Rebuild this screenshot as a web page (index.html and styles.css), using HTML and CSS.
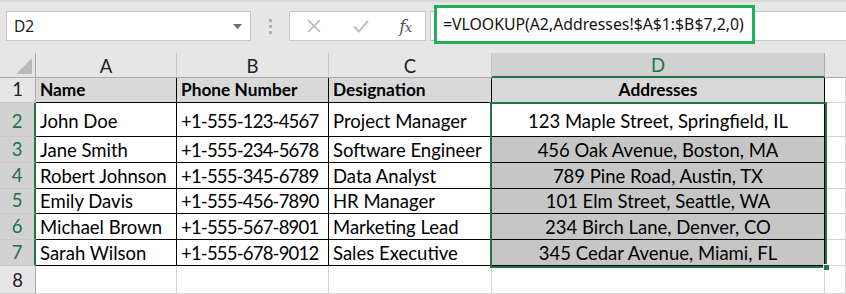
FILE: index.html
```html
<!DOCTYPE html>
<html>
<head>
<meta charset="utf-8">
<link rel="stylesheet" href="styles.css">
</head>
<body>
<div class="app">
  <div class="toolbar">
    <div class="namebox">
      <span class="nb-text">D2</span>
      <svg class="nb-arrow" width="9" height="5" viewBox="0 0 9 5"><path d="M0 0h9L4.5 5z" fill="#6d6d6d"/></svg>
    </div>
    <div class="dots"><span></span><span></span><span></span></div>
    <div class="fbtns">
      <svg class="ic" width="16" height="16" viewBox="0 0 16 16"><path d="M2 2L14 14M14 2L2 14" stroke="#b4b4b4" stroke-width="1.6" fill="none"/></svg>
      <svg class="ic" width="18" height="16" viewBox="0 0 18 16"><path d="M2 8.5L7 13.5L16 3" stroke="#c2c2c2" stroke-width="2.2" fill="none"/></svg>
      <span class="fx">f<i>x</i></span>
    </div>
    <div class="fbar">
      <div class="fbox">=VLOOKUP(A2,Addresses!$A$1:$B$7,2,0)</div>
    </div>
  </div>
  <div class="sheet">
    <div class="grid">
      <div class="corner"><span class="tri"></span></div>
      <div class="ch">A</div>
      <div class="ch">B</div>
      <div class="ch">C</div>
      <div class="ch sel">D</div>
      <div class="ch last"></div>

      <div class="rh">1</div>
      <div class="c t h">Name</div>
      <div class="c t h">Phone Number</div>
      <div class="c t h">Designation</div>
      <div class="c t h ctr">Addresses</div>
      <div class="c"></div>

      <div class="rh sel mid">2</div>
      <div class="c t mid">John Doe</div>
      <div class="c t ph mid">+1-555-123-4567</div>
      <div class="c t mid">Project Manager</div>
      <div class="c t ctr mid">123 Maple Street, Springfield, IL</div>
      <div class="c"></div>

      <div class="rh sel">3</div>
      <div class="c t">Jane Smith</div>
      <div class="c t ph">+1-555-234-5678</div>
      <div class="c t">Software Engineer</div>
      <div class="c t ctr shade">456 Oak Avenue, Boston, MA</div>
      <div class="c"></div>

      <div class="rh sel">4</div>
      <div class="c t">Robert Johnson</div>
      <div class="c t ph">+1-555-345-6789</div>
      <div class="c t">Data Analyst</div>
      <div class="c t ctr shade">789 Pine Road, Austin, TX</div>
      <div class="c"></div>

      <div class="rh sel">5</div>
      <div class="c t">Emily Davis</div>
      <div class="c t ph">+1-555-456-7890</div>
      <div class="c t">HR Manager</div>
      <div class="c t ctr shade">101 Elm Street, Seattle, WA</div>
      <div class="c"></div>

      <div class="rh sel">6</div>
      <div class="c t">Michael Brown</div>
      <div class="c t ph">+1-555-567-8901</div>
      <div class="c t">Marketing Lead</div>
      <div class="c t ctr shade">234 Birch Lane, Denver, CO</div>
      <div class="c"></div>

      <div class="rh sel">7</div>
      <div class="c t">Sarah Wilson</div>
      <div class="c t ph">+1-555-678-9012</div>
      <div class="c t">Sales Executive</div>
      <div class="c t ctr shade">345 Cedar Avenue, Miami, FL</div>
      <div class="c"></div>

      <div class="rh">8</div>
      <div class="c"></div>
      <div class="c"></div>
      <div class="c"></div>
      <div class="c"></div>
      <div class="c"></div>
    </div>
    <div class="selbox"><span class="handle"></span></div>
  </div>
</div>
</body>
</html>
```

FILE: styles.css
```css
* { box-sizing: border-box; }
html, body { margin: 0; padding: 0; }
body { background: #e6e6e6; width: 846px; height: 294px; overflow: hidden; }
.app { width: 846px; height: 294px; display: flex; flex-direction: column; }

.toolbar {
  height: 53px;
  display: flex;
  align-items: flex-start;
  padding: 9px 0 0 6px;
  background: #e6e6e6;
  border-top: 2px solid #d8d8d8;
}
.namebox {
  width: 245px; height: 30px;
  background: #fff;
  border: 1px solid #c6c6c6;
  display: flex; align-items: center; justify-content: space-between;
  padding: 0 8px 0 7px;
  font-family: "Noto Sans", "Open Sans", sans-serif;
  font-size: 15.5px; color: #222;
}
.nb-arrow { margin-top: 1px; }
.dots {
  width: 38px; height: 30px;
  display: flex; flex-direction: column; align-items: center; justify-content: center; gap: 3px;
}
.dots span { width: 3px; height: 3px; background: #b0b0b0; }
.fbtns {
  width: 137px; height: 30px;
  background: #fff;
  border: 1px solid #c6c6c6;
  display: flex; align-items: center; justify-content: space-between;
  padding: 0 14px 0 16px;
}
.fx {
  font-family: "DejaVu Serif", "Liberation Serif", serif;
  font-style: italic; font-size: 17px; color: #555;
  letter-spacing: -1px;
}
.fx i { font-size: 13px; }
.fbar {
  flex: 1; height: 30px;
  margin-left: 4px;
  background: #fff;
  border: 1px solid #c6c6c6;
  border-right: none;
  position: relative;
}
.fbox {
  position: absolute; left: 3px; top: -7px;
  width: 321px; height: 39px;
  border: 3px solid #21b15b;
  background: #fff;
  display: flex; align-items: center;
  padding-left: 6px; padding-bottom: 1px;
  font-family: "Noto Sans", "Open Sans", sans-serif;
  font-size: 15.8px; color: #111;
}

.sheet { position: relative; flex: 1; background: #fff; }
.grid {
  display: grid;
  grid-template-columns: 36px 141px 152px 163px 333px 1fr;
  grid-template-rows: 25px 25px 34px 26px 26px 25px 26px 26px 1fr;
  height: 241px;
  font-family: Lato, "Liberation Sans", sans-serif;
  font-size: 18.5px; color: #000;
}
.corner {
  background: #e6e6e6;
  border-right: 1px solid #ababab;
  border-bottom: 1px solid #ababab;
  position: relative;
}
.tri {
  position: absolute; right: 3px; bottom: 3px;
  width: 0; height: 0;
  border-left: 16px solid transparent;
  border-bottom: 16px solid #b9b9b9;
}
.ch {
  background: #e6e6e6;
  border-right: 1px solid #c8c8c8;
  border-bottom: 1px solid #ababab;
  display: flex; align-items: center; justify-content: center;
  padding-top: 1px;
  color: #222;
}
.ch.sel { background: #d2d2d2; color: #217346; border-bottom: 2px solid #217346; border-right-color: #ababab; }
.ch.last { border-right: none; }
.rh {
  background: #e6e6e6;
  border-right: 1px solid #ababab;
  border-bottom: 1px solid #c8c8c8;
  display: flex; align-items: flex-end; justify-content: center;
  padding-bottom: 2px;
  color: #222;
}
.rh.sel { background: #d2d2d2; color: #217346; border-right: 2px solid #217346; }
.c {
  border-right: 1px solid #d4d4d4;
  border-bottom: 1px solid #d4d4d4;
  display: flex; align-items: flex-end;
  padding: 0 4px 1px 4px;
  white-space: nowrap; overflow: hidden;
}
.mid { align-items: center; padding-top: 3px; padding-bottom: 0; }
.c.t { border-right-color: #000; border-bottom-color: #000; }
.c.h { background: #d9d9d9; font-weight: bold; font-size: 17.3px; padding-bottom: 2px; }
.c.ph { letter-spacing: -0.8px; }
.c.ctr { justify-content: center; }
.c.shade { background: #c6c6c6; }

.selbox {
  position: absolute;
  left: 490px; top: 49px;
  width: 337px; height: 166px;
  border: 2px solid #217346;
  pointer-events: none;
}
.handle {
  position: absolute; right: -5px; bottom: -5px;
  width: 7px; height: 7px;
  background: #217346;
  border: 1px solid #fff;
}
```
